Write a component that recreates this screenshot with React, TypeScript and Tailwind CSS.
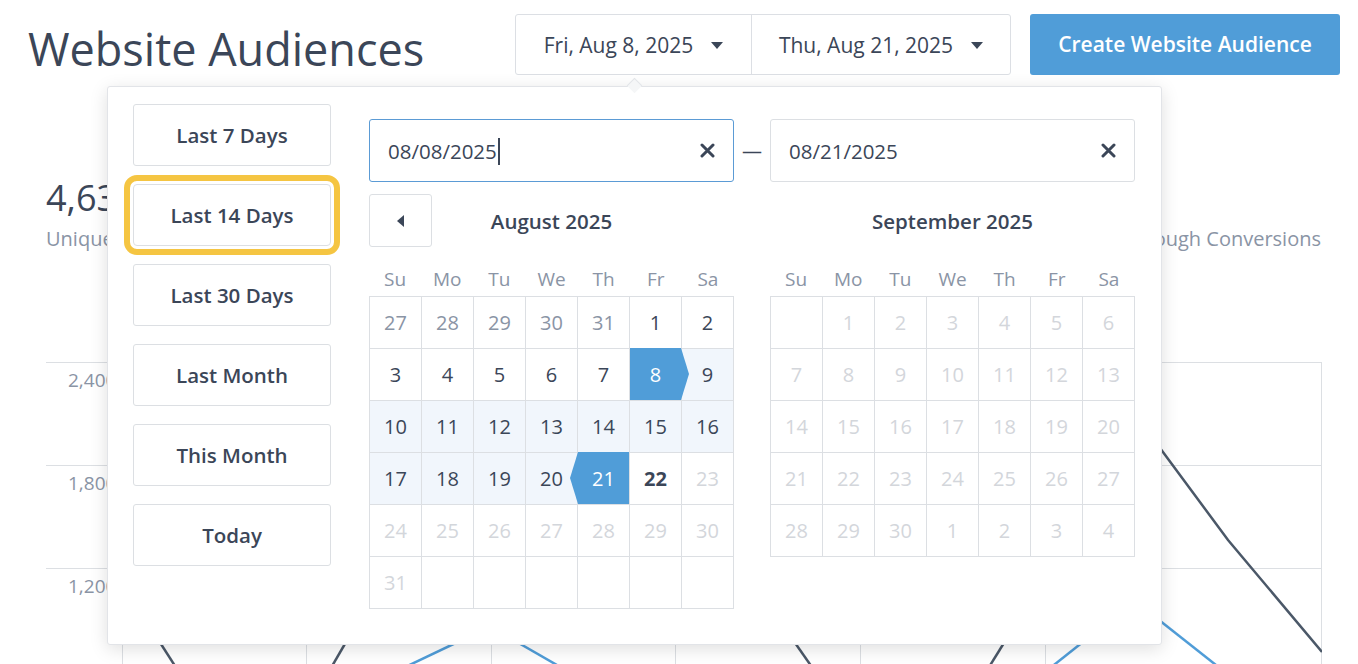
import React from 'react';

type Day = { n?: number; kind: 'prev' | 'normal' | 'start' | 'end' | 'range' | 'today' | 'disabled' | 'blank' };

const d = (n: number, kind: Day['kind']): Day => ({ n, kind });
const blank: Day = { kind: 'blank' };

const august: Day[][] = [
  [d(27, 'prev'), d(28, 'prev'), d(29, 'prev'), d(30, 'prev'), d(31, 'prev'), d(1, 'normal'), d(2, 'normal')],
  [d(3, 'normal'), d(4, 'normal'), d(5, 'normal'), d(6, 'normal'), d(7, 'normal'), d(8, 'start'), d(9, 'range')],
  [10, 11, 12, 13, 14, 15, 16].map((n) => d(n, 'range')),
  [d(17, 'range'), d(18, 'range'), d(19, 'range'), d(20, 'range'), d(21, 'end'), d(22, 'today'), d(23, 'disabled')],
  [24, 25, 26, 27, 28, 29, 30].map((n) => d(n, 'disabled')),
  [d(31, 'disabled'), blank, blank, blank, blank, blank, blank],
];

const september: Day[][] = [
  [blank, ...[1, 2, 3, 4, 5, 6].map((n) => d(n, 'disabled'))],
  [7, 8, 9, 10, 11, 12, 13].map((n) => d(n, 'disabled')),
  [14, 15, 16, 17, 18, 19, 20].map((n) => d(n, 'disabled')),
  [21, 22, 23, 24, 25, 26, 27].map((n) => d(n, 'disabled')),
  [28, 29, 30, 1, 2, 3, 4].map((n) => d(n, 'disabled')),
];

const weekDays = ['Su', 'Mo', 'Tu', 'We', 'Th', 'Fr', 'Sa'];
const presets = ['Last 7 Days', 'Last 14 Days', 'Last 30 Days', 'Last Month', 'This Month', 'Today'];

function CaretDown() {
  return (
    <svg width="12" height="7" viewBox="0 0 12 7">
      <path d="M0 0h12L6 7z" fill="#3b4658" />
    </svg>
  );
}

function ClearIcon() {
  return (
    <svg width="15" height="15" viewBox="0 0 15 15">
      <path d="M2 2l11 11M13 2L2 13" stroke="#3b4658" strokeWidth="3" strokeLinecap="round" />
    </svg>
  );
}

function DayCell({ day }: { day: Day }) {
  const base = 'relative flex h-[52px] items-center justify-center border-r border-b border-[#dcdfe3] text-[20px]';
  if (day.kind === 'blank') return <div className={base} />;
  const color =
    day.kind === 'prev'
      ? 'text-[#8a94a5]'
      : day.kind === 'disabled'
        ? 'text-[#d3d6db]'
        : day.kind === 'start' || day.kind === 'end'
          ? 'text-white'
          : 'text-[#3b4658]';
  return (
    <div className={`${base} ${day.kind === 'range' ? 'bg-[#f1f6fc]' : ''} ${color} ${day.kind === 'today' ? 'font-bold' : ''}`}>
      {day.kind === 'start' && (
        <div className="absolute -top-px bottom-0 left-0 -right-[8px] z-10 bg-[#509dd8] [clip-path:polygon(0_0,calc(100%-8px)_0,100%_50%,calc(100%-8px)_100%,0_100%)]" />
      )}
      {day.kind === 'end' && (
        <div className="absolute -top-px bottom-0 -left-[8px] right-0 z-10 bg-[#509dd8] [clip-path:polygon(8px_0,100%_0,100%_100%,8px_100%,0_50%)]" />
      )}
      <span className="relative z-20">{day.n}</span>
    </div>
  );
}

function Month({ title, rows, showPrev }: { title: string; rows: Day[][]; showPrev?: boolean }) {
  return (
    <div className="w-[365px]">
      <div className="mt-[12px] grid h-[53px] grid-cols-[63px_1fr_63px] items-center">
        {showPrev ? (
          <button className="flex h-[53px] w-[63px] items-center justify-center rounded-[3px] border border-[#dcdfe3] bg-white">
            <svg width="7" height="12" viewBox="0 0 7 12">
              <path d="M7 0v12L0 6z" fill="#3b4658" />
            </svg>
          </button>
        ) : (
          <div />
        )}
        <div className="pt-[2px] text-center text-[20.5px] font-semibold text-[#3b4658]">{title}</div>
        <div />
      </div>
      <div className="grid h-[49px] grid-cols-7 items-end pb-[4px]">
        {weekDays.map((w) => (
          <div key={w} className="text-center text-[19px] leading-[26px] text-[#8a94a5]">
            {w}
          </div>
        ))}
      </div>
      <div className="grid grid-cols-[repeat(7,52px)] border-l border-t border-[#dcdfe3]">
        {rows.flat().map((day, i) => (
          <DayCell key={i} day={day} />
        ))}
      </div>
    </div>
  );
}

export default function App() {
  // chart coords are local to the plot box (page x - 46, y - 362)
  const dark = '#4b5868';
  const blue = '#509dd8';
  const strokes: { pts: string; c: string }[] = [
    { pts: '1094,59 1182,178 1276,290', c: dark },
    { pts: '1094,243 1194,322', c: blue },
    { pts: '106,268 138,318', c: dark },
    { pts: '307,268 278,318', c: dark },
    { pts: '437,268 332,318', c: blue },
    { pts: '450,268 537,318', c: blue },
    { pts: '740,268 775,318', c: dark },
    { pts: '966,268 935,318', c: dark },
    { pts: '1052,268 989,318', c: blue },
  ];

  return (
    <div className="relative h-[664px] w-[1358px] overflow-hidden bg-white font-['Open_Sans',sans-serif] text-[#3b4658]">
      {/* Header */}
      <header className="flex items-start pl-[28px] pr-[18px] pt-[14px]">
        <h1 className="mt-[5px] text-[45px] font-normal leading-[60px]">Website Audiences</h1>
        <div className="ml-auto flex h-[61px] rounded-[3px] border border-[#dcdfe4] text-[21px]">
          <button className="flex w-[236px] items-center justify-center gap-[18px] border-r border-[#dcdfe4] pt-[2px]">
            Fri, Aug 8, 2025 <CaretDown />
          </button>
          <button className="flex w-[258px] items-center justify-center gap-[18px] pt-[2px]">
            Thu, Aug 21, 2025 <CaretDown />
          </button>
        </div>
        <button className="ml-[19px] h-[61px] w-[310px] rounded-[3px] bg-[#509dd8] pt-px text-[21px] font-semibold text-white">
          Create Website Audience
        </button>
      </header>

      {/* Stats */}
      <div className="flex justify-between pl-[46px] pr-[37px] pt-[97px]">
        <div>
          <div className="text-[36px] leading-[44px]">4,631</div>
          <div className="mt-[5px] text-[20px] leading-[28px] text-[#8a94a5]">Unique Visitors</div>
        </div>
        <div>
          <div className="text-[36px] leading-[44px]">128</div>
          <div className="mt-[5px] text-[20px] leading-[28px] text-[#8a94a5]">Click-Through Conversions</div>
        </div>
      </div>

      {/* Chart */}
      <div className="relative ml-[46px] mt-[109px] h-[320px] w-[1276px] border-r border-[#dcdfe3]">
        {['2,400', '1,800', '1,200'].map((v) => (
          <div key={v} className="h-[103px] border-t border-[#dcdfe3] pl-[22px] pt-[4px] text-[19px] leading-[26px] text-[#8a94a5]">
            {v}
          </div>
        ))}
        <svg className="absolute left-0 top-0" width="1276" height="320">
          {[76, 260, 445, 629, 814, 999].map((x) => (
            <line key={x} x1={x + 0.5} y1="0" x2={x + 0.5} y2="320" stroke="#dcdfe3" strokeWidth="1" />
          ))}
          {strokes.map((s, i) => (
            <polyline key={i} points={s.pts} fill="none" stroke={s.c} strokeWidth="2.5" />
          ))}
        </svg>
      </div>

      {/* Date range popover */}
      <div className="absolute left-[107px] top-[86px] flex h-[559px] w-[1055px] rounded-[3px] border border-[#e2e4e8] bg-white shadow-[0_4px_18px_rgba(0,0,0,0.13)]">
        <div className="absolute -top-[7px] left-[521px] h-[11px] w-[11px] rotate-45 border-l border-t border-[#e2e4e8] bg-[#f5f6f7]" />

        <div className="flex flex-col gap-[18px] pl-[25px] pt-[17px]">
          {presets.map((p) => (
            <button
              key={p}
              className={`h-[62px] w-[198px] rounded-[3px] border border-[#dcdfe3] bg-white pt-px text-[20.5px] font-semibold text-[#3b4658] ${
                p === 'Last 14 Days' ? 'rounded-[4px] outline-[6px] outline-offset-[3px] outline-[#f5c542] outline-solid' : ''
              }`}
            >
              {p}
            </button>
          ))}
        </div>

        <div className="ml-[38px] pt-[32px]">
          <div className="flex items-center">
            <div className="flex h-[63px] w-[365px] items-center justify-between rounded-[3px] border border-[#5b9bd5] px-[18px] text-[20.5px]">
              <span className="flex items-center pt-px">
                08/08/2025
                <span className="ml-px inline-block h-[27px] w-[2px] bg-[#3b4658]" />
              </span>
              <ClearIcon />
            </div>
            <div className="flex w-[36px] justify-center text-[20px]">—</div>
            <div className="flex h-[63px] w-[365px] items-center justify-between rounded-[3px] border border-[#dcdfe3] px-[18px] text-[20.5px]">
              <span className="pt-px">08/21/2025</span>
              <ClearIcon />
            </div>
          </div>
          <div className="flex items-start gap-[36px]">
            <Month title="August 2025" rows={august} showPrev />
            <Month title="September 2025" rows={september} />
          </div>
        </div>
      </div>
    </div>
  );
}
